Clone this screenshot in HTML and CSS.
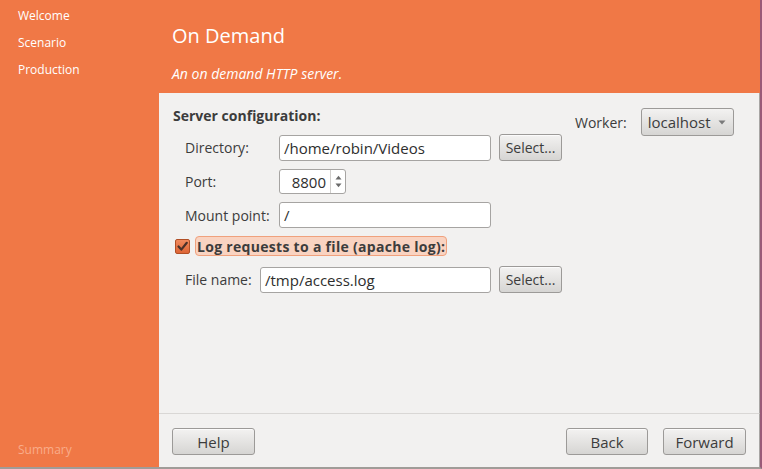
FILE: index.html
```html
<!DOCTYPE html>
<html>
<head>
<meta charset="utf-8">
<link rel="stylesheet" href="styles.css">
</head>
<body>
<div class="window">
  <nav class="sidebar">
    <ul class="steps">
      <li>Welcome</li>
      <li>Scenario</li>
      <li>Production</li>
    </ul>
    <div class="summary">Summary</div>
  </nav>
  <main class="main">
    <header class="header">
      <h1 class="title">On Demand</h1>
      <p class="subtitle">An on demand HTTP server.</p>
    </header>
    <section class="content">
      <div class="form">
        <div class="section-title">Server configuration:</div>
        <div class="row row-dir">
          <span class="label">Directory:</span>
          <span class="entry entry-wide">/home/robin/Videos</span>
          <span class="button select">Select...</span>
        </div>
        <div class="row row-port">
          <span class="label">Port:</span>
          <span class="spin">
            <span class="spin-value">8800</span>
            <span class="spin-arrows">
              <svg width="7" height="5" viewBox="0 0 7 5"><path d="M0.5 4.5 L3.5 0.8 L6.5 4.5 Z" fill="#6a6a6a"/></svg>
              <svg width="7" height="5" viewBox="0 0 7 5"><path d="M0.5 0.5 L3.5 4.2 L6.5 0.5 Z" fill="#6a6a6a"/></svg>
            </span>
          </span>
        </div>
        <div class="row row-mount">
          <span class="label">Mount point:</span>
          <span class="entry entry-wide">/</span>
        </div>
        <div class="check-row">
          <span class="checkbox">
            <svg width="13" height="13" viewBox="0 0 13 13"><path d="M2.5 6.5 L5.3 9.6 L10.8 2.8" fill="none" stroke="#4a3129" stroke-width="2.2" stroke-linecap="round" stroke-linejoin="round"/></svg>
          </span>
          <span class="check-label">Log requests to a file (apache log):</span>
        </div>
        <div class="row row-file">
          <span class="label label-file">File name:</span>
          <span class="entry entry-file">/tmp/access.log</span>
          <span class="button select">Select...</span>
        </div>
      </div>
      <div class="worker">
        <span class="worker-label">Worker:</span>
        <span class="combo">localhost
          <svg class="combo-arrow" width="8" height="5" viewBox="0 0 8 5"><path d="M0.5 0.5 L4 4.5 L7.5 0.5 Z" fill="#7a7a7a"/></svg>
        </span>
      </div>
    </section>
    <footer class="footer">
      <span class="button fbtn help">Help</span>
      <span class="spacer"></span>
      <span class="button fbtn back">Back</span>
      <span class="button fbtn forward">Forward</span>
    </footer>
  </main>
</div>
</body>
</html>
```

FILE: styles.css
```css
* { box-sizing: border-box; }
html, body { margin: 0; padding: 0; }
body {
  width: 762px;
  height: 469px;
  overflow: hidden;
  font-family: "Open Sans", "DejaVu Sans", sans-serif;
  font-size: 14px;
  color: #3c3c3c;
  background: #f07846;
}
.window {
  display: flex;
  width: 762px;
  height: 469px;
  border-right: 2px solid #9a5a78;
  border-bottom: 2px solid #a09c98;
  background: #f07846;
}
.sidebar {
  width: 159px;
  flex: none;
  display: flex;
  flex-direction: column;
  padding: 7px 0 8px 18px;
}
.steps {
  list-style: none;
  margin: 0;
  padding: 0;
  display: flex;
  flex-direction: column;
  gap: 9px;
  color: #ffffff;
  font-size: 12px;
  line-height: 18px;
}
.summary {
  margin-top: auto;
  color: #f9ac8a;
  font-size: 12px;
  line-height: 18px;
}
.main {
  flex: 1;
  display: flex;
  flex-direction: column;
}
.header {
  height: 93px;
  flex: none;
  padding: 24px 0 0 13px;
  color: #ffffff;
}
.title {
  margin: 0;
  font-weight: normal;
  font-size: 20px;
  line-height: 24px;
}
.subtitle {
  margin: 17px 0 0 0;
  font-style: italic;
  font-size: 14px;
  line-height: 18px;
}
.content {
  flex: 1;
  background: #f2f1f0;
  border-right: 1px solid #a8a6a4;
  display: flex;
  padding: 0 0 0 14px;
}
.form {
  width: 420px;
  display: flex;
  flex-direction: column;
  padding-top: 107px;
  margin-top: -93px;
}
.section-title {
  font-weight: bold;
  line-height: 18px;
  color: #3c3c3c;
}
.row {
  display: flex;
  align-items: center;
  padding-left: 12px;
}
.row-dir { margin-top: 9px; height: 27px; }
.row-port { margin-top: 8px; height: 25px; }
.row-mount { margin-top: 8px; height: 26px; }
.row-file { margin-top: 10px; height: 27px; }
.label {
  width: 94px;
  flex: none;
  color: #3c3c3c;
}
.label-file { width: 75px; }
.entry {
  height: 26px;
  background: #ffffff;
  border: 1px solid #a6a4a2;
  border-radius: 3px;
  padding: 0 4px;
  display: flex;
  align-items: center;
  font-size: 15px;
  color: #2e2e2e;
}
.entry-wide { width: 212px; }
.entry-file { width: 231px; }
.button {
  display: flex;
  align-items: center;
  justify-content: center;
  border: 1px solid #9c9a98;
  border-radius: 3px;
  background: linear-gradient(#f3f2f1, #d6d5d3);
  color: #3c3c3c;
  box-shadow: inset 0 1px 0 rgba(255,255,255,0.7);
}
.select {
  margin-left: 8px;
  width: 63px;
  height: 27px;
  font-size: 14px;
}
.spin {
  display: flex;
  width: 67px;
  height: 25px;
  background: #ffffff;
  border: 1px solid #a6a4a2;
  border-radius: 3px;
}
.spin-value {
  flex: 1;
  display: flex;
  align-items: center;
  justify-content: flex-end;
  padding-right: 4px;
  font-size: 15px;
  color: #2e2e2e;
}
.spin-arrows {
  width: 15px;
  border-left: 1px solid #d0cecc;
  display: flex;
  flex-direction: column;
  align-items: center;
  justify-content: center;
  gap: 3px;
}
.spin-arrows svg { display: block; }
.check-row {
  margin-top: 8px;
  height: 20px;
  display: flex;
  align-items: center;
  padding-left: 2px;
}
.checkbox {
  width: 15px;
  height: 15px;
  border: 1px solid #b14f25;
  border-radius: 2px;
  background: linear-gradient(#f08a5e, #de6535);
  display: flex;
  align-items: center;
  justify-content: center;
}
.checkbox svg { display: block; }
.check-label {
  margin-left: 5px;
  height: 20px;
  width: 252px;
  display: flex;
  align-items: center;
  padding-left: 1px;
  background: #f9d3c1;
  border: 1px solid #f0a17d;
  border-radius: 4px;
  font-weight: bold;
  letter-spacing: 0.3px;
  color: #3c3c3c;
  white-space: nowrap;
}
.worker {
  display: flex;
  align-items: center;
  margin-top: 15px;
  margin-left: -18px;
  height: 28px;
}
.worker-label { margin-right: 14px; }
.combo {
  width: 93px;
  height: 28px;
  display: flex;
  align-items: center;
  padding: 0 0 0 6px;
  border: 1px solid #9c9a98;
  border-radius: 3px;
  background: linear-gradient(#f3f2f1, #d6d5d3);
  font-size: 15px;
  color: #3c3c3c;
  position: relative;
}
.combo-arrow {
  position: absolute;
  right: 7px;
  top: 11px;
}
.footer {
  height: 54px;
  flex: none;
  background: #f2f1f0;
  border-top: 1px solid #d9d7d5;
  border-right: 1px solid #a8a6a4;
  display: flex;
  align-items: flex-start;
  padding: 14px 13px 0 13px;
}
.fbtn {
  height: 27px;
  font-size: 15px;
}
.help { width: 83px; }
.spacer { flex: 1; }
.back { width: 82px; }
.forward { width: 83px; margin-left: 15px; }
```
